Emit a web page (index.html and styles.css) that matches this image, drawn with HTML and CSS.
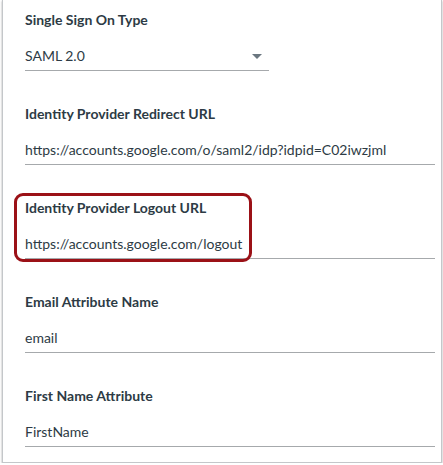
FILE: index.html
```html
<!DOCTYPE html>
<html>
<head>
<meta charset="utf-8">
<link rel="stylesheet" href="styles.css">
</head>
<body>
<div class="card">
  <div class="field">
    <div class="label">Single Sign On Type</div>
    <div class="control select">
      <span class="value">SAML 2.0</span>
      <svg class="caret" width="10" height="5" viewBox="0 0 10 5"><path d="M0 0H10L5 5Z" fill="#6b7780"/></svg>
    </div>
  </div>
  <div class="field">
    <div class="label">Identity Provider Redirect URL</div>
    <div class="control">https://accounts.google.com/o/saml2/idp?idpid=C02iwzjml</div>
  </div>
  <div class="field">
    <div class="label">Identity Provider Logout URL</div>
    <div class="control">https://accounts.google.com/logout</div>
    <div class="highlight"></div>
  </div>
  <div class="field">
    <div class="label">Email Attribute Name</div>
    <div class="control">email</div>
  </div>
  <div class="field">
    <div class="label">First Name Attribute</div>
    <div class="control">FirstName</div>
  </div>
</div>
</body>
</html>
```

FILE: styles.css
```css
html, body {
  margin: 0;
  padding: 0;
  background: #ffffff;
}
body {
  font-family: Lato, "Open Sans", sans-serif;
  color: #2d3b45;
}
.card {
  margin-left: 2px;
  width: 440px;
  box-sizing: border-box;
  border: 1px solid #c4c7ca;
  border-top: none;
  box-shadow: 0 1px 2px rgba(0,0,0,0.35);
  padding: 10px 6px 15px 22px;
  background: #fff;
}
.field {
  position: relative;
  margin-bottom: 33px;
}
.field:last-child {
  margin-bottom: 0;
}
.label {
  font-size: 14px;
  font-weight: 700;
  line-height: 20px;
}
.control {
  margin-top: 16px;
  font-size: 14px;
  line-height: 20px;
  padding-bottom: 4px;
  border-bottom: 1px solid #a6a9ac;
}
.select {
  width: 244px;
  display: flex;
  align-items: center;
  justify-content: space-between;
}
.caret {
  margin-right: 7px;
  margin-top: 1px;
}
.highlight {
  position: absolute;
  top: -5px;
  left: -11px;
  width: 238px;
  height: 69px;
  box-sizing: border-box;
  border: 3px solid #9b1117;
  border-radius: 9px;
}
```
